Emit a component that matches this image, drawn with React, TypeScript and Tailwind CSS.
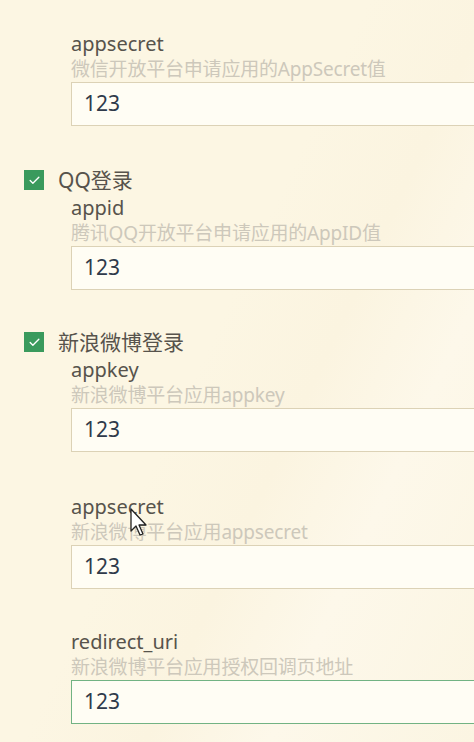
import { Check } from "lucide-react";

type Field = { label: string; hint: string; value: string; focused?: boolean };

const font = { fontFamily: '"Noto Sans", "Noto Sans CJK SC", sans-serif' };

function FieldRow({ label, hint, value, focused }: Field) {
  return (
    <div className="pl-[71px]">
      <div className="h-[27px] text-[20px] leading-[27px] text-[#57534c]">{label}</div>
      <div className="h-[25px] text-[19px] leading-[25px] tracking-[-0.2px] text-[#cdc8bb]">{hint}</div>
      <div
        className={
          "flex h-[44px] w-[440px] items-center border bg-[#fffdf4] pl-[12px] text-[21px] text-[#2f3a4a] " +
          (focused ? "border-[#72b383]" : "border-[#dcd2b6]")
        }
      >
        {value}
      </div>
    </div>
  );
}

function CheckRow({ label }: { label: string }) {
  return (
    <div className="flex h-[28px] items-center gap-[14px] pl-[24px]">
      <span className="flex h-[20px] w-[20px] items-center justify-center bg-[#3a9a5d]">
        <Check className="h-[13px] w-[13px] text-white" strokeWidth={2.5} />
      </span>
      <span className="text-[21px] leading-[28px] text-[#57534c]">{label}</span>
    </div>
  );
}

export default function App() {
  return (
    <div
      className="relative min-h-[742px] w-full overflow-hidden bg-[linear-gradient(115deg,#fcf6e3_0%,#fcf6e3_45%,#fbf4e0_60%,#fdf8ea_75%,#fbf5e2_100%)] pt-[30px]"
      style={font}
    >
      <FieldRow label="appsecret" hint="微信开放平台申请应用的AppSecret值" value="123" />

      <div className="mt-10">
        <CheckRow label="QQ登录" />
        <FieldRow label="appid" hint="腾讯QQ开放平台申请应用的AppID值" value="123" />
      </div>

      <div className="mt-[38px]">
        <CheckRow label="新浪微博登录" />
        <FieldRow label="appkey" hint="新浪微博平台应用appkey" value="123" />
      </div>

      <div className="mt-[41px]">
        <FieldRow label="appsecret" hint="新浪微博平台应用appsecret" value="123" />
      </div>

      <div className="mt-[39px]">
        <FieldRow label="redirect_uri" hint="新浪微博平台应用授权回调页地址" value="123" focused />
      </div>

      {/* mouse pointer */}
      <svg className="absolute left-[130px] top-[508px]" width="20" height="30" viewBox="0 0 20 30">
        <path d="M1 1 L1 23 L6 18 L10 27 L13 26 L9 17 L16 17 Z" fill="#fff" stroke="#222" strokeWidth="1.3" strokeLinejoin="round" />
      </svg>
    </div>
  );
}
